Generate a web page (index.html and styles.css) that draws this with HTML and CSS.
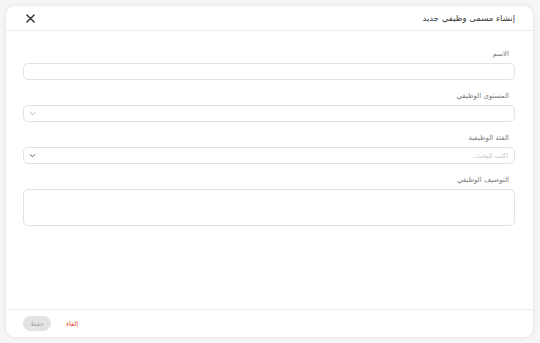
FILE: index.html
```html
<!DOCTYPE html>
<html lang="ar" dir="rtl">
<head>
<meta charset="utf-8">
<link rel="stylesheet" href="styles.css">
</head>
<body>
<div class="card">
  <div class="header">
    <div class="title">إنشاء مسمى وظيفي جديد</div>
    <button class="close" aria-label="close">
      <svg width="9" height="9" viewBox="0 0 10 10"><path d="M1 1L9 9M9 1L1 9" stroke="#333" stroke-width="1.6" stroke-linecap="round"/></svg>
    </button>
  </div>
  <div class="body">
    <div class="field">
      <div class="label">الاسم</div>
      <div class="input"></div>
    </div>
    <div class="field">
      <div class="label">المستوى الوظيفي</div>
      <div class="input select">
        <span></span>
        <svg class="chev" width="7" height="5" viewBox="0 0 8 5"><path d="M1 1L4 4L7 1" fill="none" stroke="#aaa" stroke-width="1"/></svg>
      </div>
    </div>
    <div class="field">
      <div class="label">الفئة الوظيفية</div>
      <div class="input select">
        <span class="placeholder">اكتب للبحث...</span>
        <svg class="chev" width="7" height="5" viewBox="0 0 8 5"><path d="M1 1L4 4L7 1" fill="none" stroke="#555" stroke-width="1.1"/></svg>
      </div>
    </div>
    <div class="field">
      <div class="label">التوصيف الوظيفي</div>
      <div class="input textarea"></div>
    </div>
  </div>
  <div class="footer">
    <button class="cancel">إلغاء</button>
    <button class="save">حفظ</button>
  </div>
</div>
</body>
</html>
```

FILE: styles.css
```css
* { box-sizing: border-box; }
html, body { margin: 0; padding: 0; }
body {
  width: 540px;
  height: 343px;
  background: #f6f6f6;
  font-family: "DejaVu Sans", sans-serif;
  padding: 6px 7px 6px 6px;
}
.card {
  width: 527px;
  height: 331px;
  background: #fff;
  border-radius: 9px;
  box-shadow: 0 0 5px rgba(0,0,0,0.09);
  display: flex;
  flex-direction: column;
}
.header {
  height: 25px;
  border-bottom: 1px solid #ececec;
  display: flex;
  align-items: center;
  justify-content: space-between;
  padding: 0 18px 0 19px;
}
.title {
  font-size: 8.5px;
  color: #3a3a3a;
}
.close {
  border: 0;
  background: none;
  padding: 0;
  width: 10px;
  height: 10px;
  display: flex;
  align-items: center;
  justify-content: center;
}
.body {
  flex: 1;
  padding: 18px 18px 0 17px;
  display: flex;
  flex-direction: column;
  gap: 11px;
}
.field {
  display: flex;
  flex-direction: column;
}
.label {
  font-size: 7px;
  line-height: 10px;
  color: #7a7a7a;
  padding-right: 6px;
  margin-bottom: 4px;
}
.input {
  height: 17px;
  border: 1px solid #e2e2e2;
  border-radius: 5px;
  display: flex;
  align-items: center;
  justify-content: space-between;
  padding: 0 6px 0 5px;
}
.textarea { height: 37px; }
.placeholder {
  font-size: 6.5px;
  color: #c4c4c4;
}
.footer {
  height: 28px;
  border-top: 1px solid #ececec;
  display: flex;
  align-items: center;
  justify-content: flex-end;
  gap: 15px;
  padding: 0 17px;
}
.footer button {
  font-family: "DejaVu Sans", sans-serif;
  border: 0;
  background: none;
  padding: 0;
  font-size: 6.5px;
}
.cancel { color: #e8452c; }
.save {
  width: 28px;
  height: 15px;
  border-radius: 8px;
  background: #e3e3e3 !important;
  color: #a8a8a8;
}
```
